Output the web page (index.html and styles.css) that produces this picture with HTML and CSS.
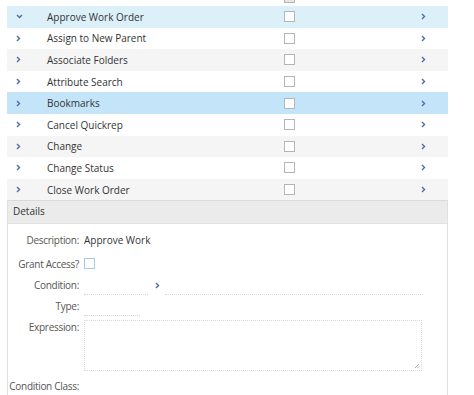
FILE: index.html
```html
<!DOCTYPE html>
<html lang="en">
<head>
    <meta charset="UTF-8">
    <title>Actions</title>
    <link rel="stylesheet" href="styles.css">
</head>
<body>
    <div class="page">
        <div class="top-edge"><span class="cb"></span></div>
        <div class="list">
            <div class="row selected">
                <span class="toggle"><svg width="7" height="5" viewBox="0 0 7 5"><path d="M1 1l2.5 2.5L6 1" fill="none" stroke="#4a6ea8" stroke-width="1.4"/></svg></span>
                <span class="name">Approve Work Order</span>
                <span class="check"><span class="cb"></span></span>
                <span class="go"><svg width="5" height="7" viewBox="0 0 5 7"><path d="M1 1l2.5 2.5L1 6" fill="none" stroke="#4a6ea8" stroke-width="1.4"/></svg></span>
            </div>
            <div class="row">
                <span class="toggle"><svg width="5" height="7" viewBox="0 0 5 7"><path d="M1 1l2.5 2.5L1 6" fill="none" stroke="#4a6ea8" stroke-width="1.4"/></svg></span>
                <span class="name">Assign to New Parent</span>
                <span class="check"><span class="cb"></span></span>
                <span class="go"><svg width="5" height="7" viewBox="0 0 5 7"><path d="M1 1l2.5 2.5L1 6" fill="none" stroke="#4a6ea8" stroke-width="1.4"/></svg></span>
            </div>
            <div class="row alt">
                <span class="toggle"><svg width="5" height="7" viewBox="0 0 5 7"><path d="M1 1l2.5 2.5L1 6" fill="none" stroke="#4a6ea8" stroke-width="1.4"/></svg></span>
                <span class="name">Associate Folders</span>
                <span class="check"><span class="cb"></span></span>
                <span class="go"><svg width="5" height="7" viewBox="0 0 5 7"><path d="M1 1l2.5 2.5L1 6" fill="none" stroke="#4a6ea8" stroke-width="1.4"/></svg></span>
            </div>
            <div class="row">
                <span class="toggle"><svg width="5" height="7" viewBox="0 0 5 7"><path d="M1 1l2.5 2.5L1 6" fill="none" stroke="#4a6ea8" stroke-width="1.4"/></svg></span>
                <span class="name">Attribute Search</span>
                <span class="check"><span class="cb"></span></span>
                <span class="go"><svg width="5" height="7" viewBox="0 0 5 7"><path d="M1 1l2.5 2.5L1 6" fill="none" stroke="#4a6ea8" stroke-width="1.4"/></svg></span>
            </div>
            <div class="row hover">
                <span class="toggle"><svg width="5" height="7" viewBox="0 0 5 7"><path d="M1 1l2.5 2.5L1 6" fill="none" stroke="#4a6ea8" stroke-width="1.4"/></svg></span>
                <span class="name">Bookmarks</span>
                <span class="check"><span class="cb"></span></span>
                <span class="go"><svg width="5" height="7" viewBox="0 0 5 7"><path d="M1 1l2.5 2.5L1 6" fill="none" stroke="#4a6ea8" stroke-width="1.4"/></svg></span>
            </div>
            <div class="row">
                <span class="toggle"><svg width="5" height="7" viewBox="0 0 5 7"><path d="M1 1l2.5 2.5L1 6" fill="none" stroke="#4a6ea8" stroke-width="1.4"/></svg></span>
                <span class="name">Cancel Quickrep</span>
                <span class="check"><span class="cb"></span></span>
                <span class="go"><svg width="5" height="7" viewBox="0 0 5 7"><path d="M1 1l2.5 2.5L1 6" fill="none" stroke="#4a6ea8" stroke-width="1.4"/></svg></span>
            </div>
            <div class="row alt">
                <span class="toggle"><svg width="5" height="7" viewBox="0 0 5 7"><path d="M1 1l2.5 2.5L1 6" fill="none" stroke="#4a6ea8" stroke-width="1.4"/></svg></span>
                <span class="name">Change</span>
                <span class="check"><span class="cb"></span></span>
                <span class="go"><svg width="5" height="7" viewBox="0 0 5 7"><path d="M1 1l2.5 2.5L1 6" fill="none" stroke="#4a6ea8" stroke-width="1.4"/></svg></span>
            </div>
            <div class="row">
                <span class="toggle"><svg width="5" height="7" viewBox="0 0 5 7"><path d="M1 1l2.5 2.5L1 6" fill="none" stroke="#4a6ea8" stroke-width="1.4"/></svg></span>
                <span class="name">Change Status</span>
                <span class="check"><span class="cb"></span></span>
                <span class="go"><svg width="5" height="7" viewBox="0 0 5 7"><path d="M1 1l2.5 2.5L1 6" fill="none" stroke="#4a6ea8" stroke-width="1.4"/></svg></span>
            </div>
            <div class="row alt">
                <span class="toggle"><svg width="5" height="7" viewBox="0 0 5 7"><path d="M1 1l2.5 2.5L1 6" fill="none" stroke="#4a6ea8" stroke-width="1.4"/></svg></span>
                <span class="name">Close Work Order</span>
                <span class="check"><span class="cb"></span></span>
                <span class="go"><svg width="5" height="7" viewBox="0 0 5 7"><path d="M1 1l2.5 2.5L1 6" fill="none" stroke="#4a6ea8" stroke-width="1.4"/></svg></span>
            </div>
        </div>

        <div class="details">
            <div class="details-head">Details</div>
            <div class="form">
                <div class="field f-desc">
                    <label>Description:</label>
                    <span class="value">Approve Work</span>
                </div>
                <div class="field f-grant">
                    <label>Grant Access?</label>
                    <span class="cb blue"></span>
                </div>
                <div class="field f-cond">
                    <label>Condition:</label>
                    <span class="input short"></span>
                    <span class="lookup"><svg width="5" height="7" viewBox="0 0 5 7"><path d="M1 1l2.5 2.5L1 6" fill="none" stroke="#4a6ea8" stroke-width="1.4"/></svg></span>
                    <span class="input long"></span>
                </div>
                <div class="field f-type">
                    <label>Type:</label>
                    <span class="input small"></span>
                </div>
                <div class="field f-expr">
                    <label>Expression:</label>
                    <span class="textarea"><svg class="grip" width="6" height="6" viewBox="0 0 6 6"><path d="M5 1L1 5M5 3.5L3.5 5" stroke="#999" stroke-width="0.8"/></svg></span>
                </div>
                <div class="field f-class">
                    <label>Condition Class:</label>
                    <span class="input small"></span>
                </div>
            </div>
        </div>
    </div>
</body>
</html>
```

FILE: styles.css
```css
body {
    margin: 0;
    background: #fff;
    font-family: "Open Sans", "Liberation Sans", sans-serif;
    font-size: 10px;
    color: #333;
}
.page {
    width: 441px;
    margin-left: 7px;
}
.top-edge {
    height: 6px;
    position: relative;
    overflow: hidden;
}
.top-edge .cb {
    position: absolute;
    left: 277px;
    top: -8px;
    background: #e6e6e6;
}
.row {
    display: flex;
    align-items: center;
    height: 21.6px;
}
.row.selected {
    background: #dcf0f9;
}
.row.hover {
    background: #c4e4fa;
}
.row.alt {
    background: #f5f5f5;
}
.toggle {
    width: 40px;
    padding-left: 9px;
    box-sizing: border-box;
    display: flex;
    align-items: center;
}
.name {
    width: 237px;
}
.check {
    width: 30px;
    display: flex;
}
.cb {
    display: inline-block;
    width: 9px;
    height: 9px;
    border: 1px solid #b5b5b5;
    background: #fff;
}
.cb.blue {
    border-color: #a9c8e3;
}
.go {
    flex: 1;
    display: flex;
    justify-content: flex-end;
    padding-right: 22px;
}
.details {
    border: 1px solid #e0e0e0;
    border-top: 1px solid #dadada;
    height: 200px;
}
.details-head {
    background: #ebebeb;
    height: 22px;
    line-height: 20px;
    padding-left: 5px;
    border-bottom: 1px solid #e2e2e2;
    color: #333;
}
.form {
    padding-top: 4px;
}
.field {
    display: flex;
    align-items: center;
}
.field label {
    width: 71px;
    flex-shrink: 0;
    display: flex;
    justify-content: flex-end;
    white-space: pre;
    margin-right: 5px;
    color: #555;
    letter-spacing: -0.3px;
}
.f-desc { height: 24px; }
.f-grant { height: 23px; }
.f-cond { height: 20px; }
.f-type { height: 22px; }
.f-expr {
    align-items: flex-start;
    height: 54px;
    margin-top: 3px;
}
.f-class {
    height: 16px;
    margin-top: 4px;
}
.input {
    display: inline-block;
    height: 12px;
    margin-top: 7px;
    border-bottom: 1px dotted #d6d6d6;
}
.input.short { width: 64px; }
.input.long { width: 258px; }
.input.small { width: 56px; }
.lookup {
    width: 17px;
    padding-left: 7px;
    box-sizing: border-box;
    display: flex;
}
.textarea {
    display: block;
    position: relative;
    width: 336px;
    height: 49px;
    border: 1px dotted #d8d8d8;
}
.grip {
    position: absolute;
    right: 1px;
    bottom: 1px;
}
```
